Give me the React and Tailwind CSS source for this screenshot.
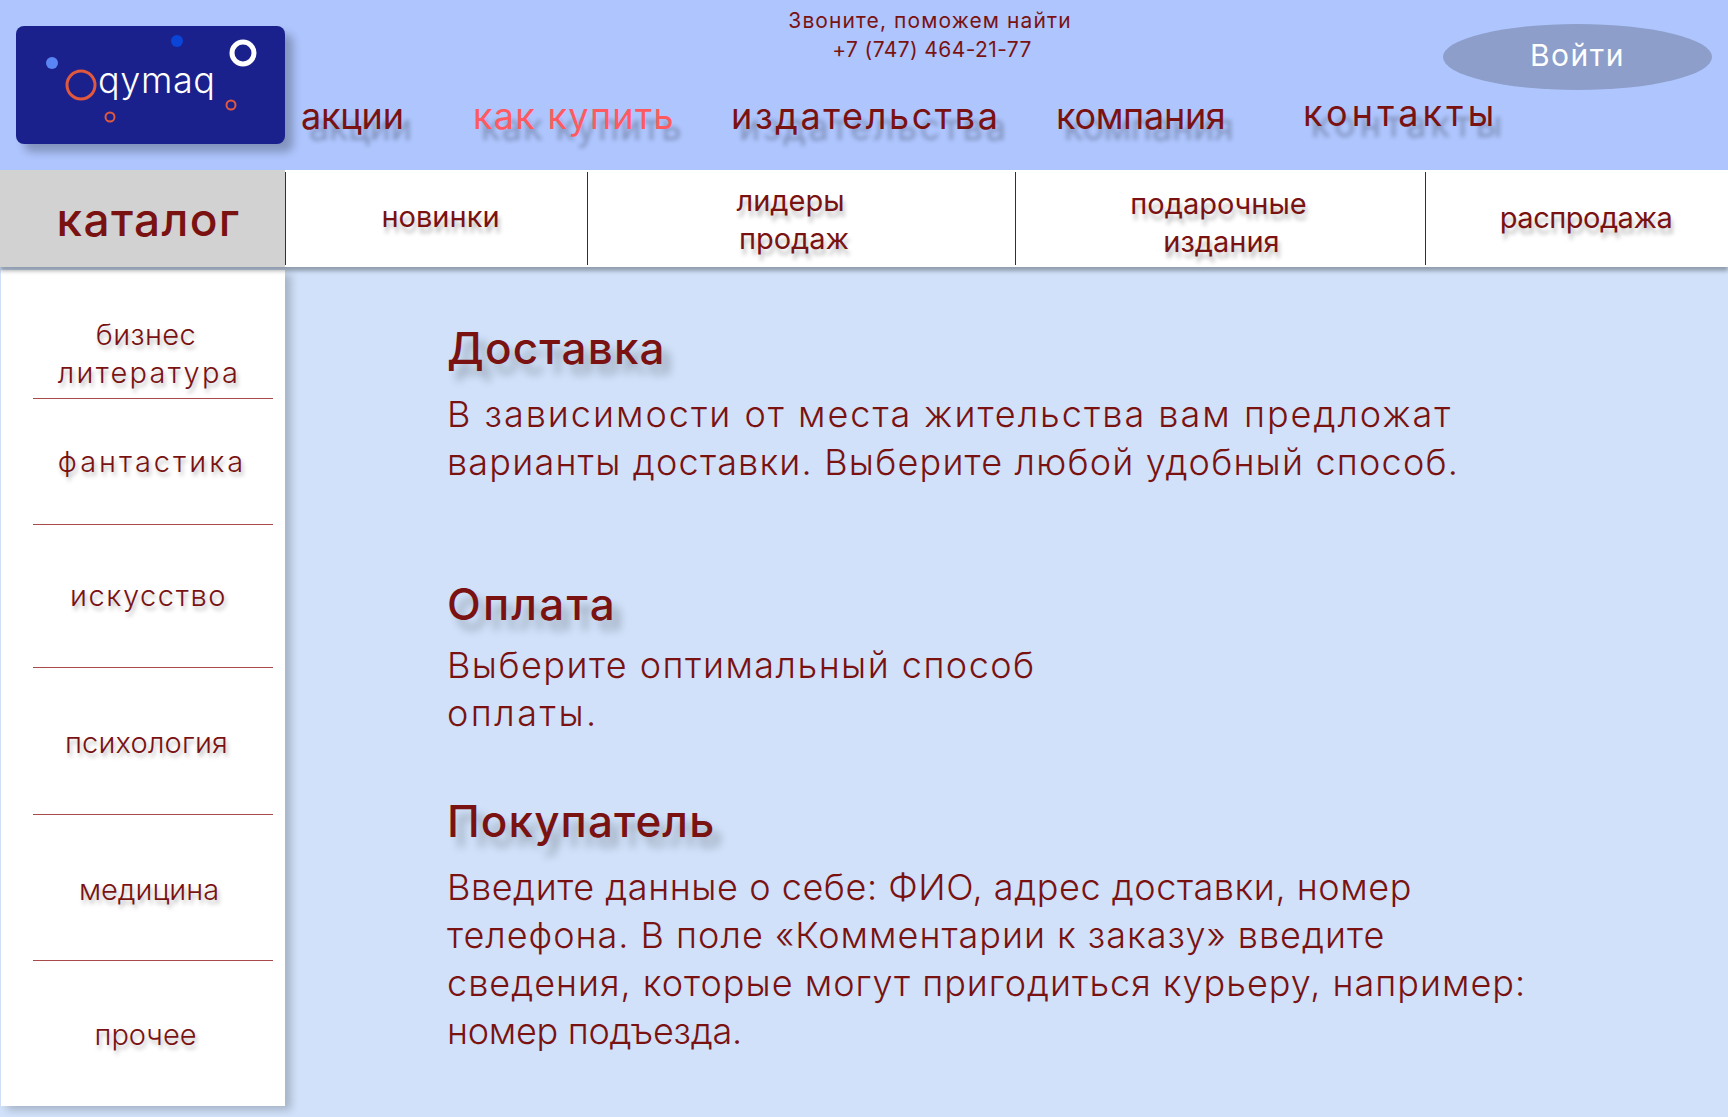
import React from 'react';

const shadowNav = '[text-shadow:8px_11px_4px_rgba(0,0,0,0.25)]';
const shadowCell = '[text-shadow:2px_6px_4px_rgba(0,0,0,0.25)]';
const shadowSide = '[text-shadow:2px_4px_4px_rgba(0,0,0,0.25)]';
const shadowHead = '[text-shadow:8px_10px_8px_rgba(0,0,0,0.25)]';

const Logo = () => (
  <div className="w-[269px] h-[118px] ml-4 mt-[26px] shrink-0 rounded-lg bg-[#1b218c] shadow-[8px_8px_8px_rgba(0,0,0,0.25)] relative">
    <svg width="269" height="118" viewBox="0 0 269 118" className="absolute inset-0">
      <circle cx="36" cy="37" r="6" fill="#5a86f5" />
      <circle cx="161" cy="15" r="6" fill="#0a45d8" />
      <circle cx="227" cy="27" r="11" fill="none" stroke="#fff" strokeWidth="5" />
      <circle cx="65" cy="59" r="14" fill="none" stroke="#e0583e" strokeWidth="3" />
      <circle cx="94" cy="91" r="4.5" fill="none" stroke="#e0583e" strokeWidth="2" />
      <circle cx="215" cy="79" r="4.5" fill="none" stroke="#e0583e" strokeWidth="2" />
      <text x="82" y="67" fill="#fff" fontSize="36" fontFamily="Inter, sans-serif" fontWeight="300" textLength="117">qymaq</text>
    </svg>
  </div>
);

const navItems = [
  { label: 'акции', cls: 'w-[172px] pt-2 text-[#7a1212] tracking-[-0.2px]' },
  { label: 'как купить', cls: 'w-[258px] pt-2 text-[#ff5a5f] tracking-[1.3px]' },
  { label: 'издательства', cls: 'w-[325px] pt-2 text-[#7a1212] tracking-[2.6px]' },
  { label: 'компания', cls: 'w-[247px] pt-2 text-[#7a1212] tracking-[-0.3px]' },
  { label: 'контакты', cls: 'w-[240px] pt-[5px] text-[#7a1212] tracking-[4.2px]' },
];

const Header = () => (
  <header className="h-[170px] bg-[#aec5fd] flex">
    <Logo />
    <div className="ml-4 flex-1 flex flex-col">
      <div className="h-[86px] flex">
        <div className="w-[1142px] pt-1.5 pl-[391px] text-center text-[21px] leading-[29px] font-normal text-[#7a1212]">
          <div className="w-[480px] ml-[-2px] tracking-[1.1px]">Звоните, поможем найти</div>
          <div className="w-[480px] tracking-[0.4px]">+7 (747) 464-21-77</div>
        </div>
      </div>
      <nav className="flex text-[36px] leading-[44px] font-normal">
        {navItems.map((n) => (
          <a key={n.label} className={`${n.cls} ${shadowNav} whitespace-nowrap`}>{n.label}</a>
        ))}
      </nav>
    </div>
    <div className="absolute left-[1443px] top-6 w-[269px] h-[66px] rounded-[50%] bg-[#8c9ec9] flex items-center justify-center text-white text-[30px] tracking-[1.5px]">
      <span className="mt-[-4px]">Войти</span>
    </div>
  </header>
);

const Cell = ({ cls, lines }) => (
  <div className={`${cls} h-full flex flex-col items-center justify-center text-[29px] leading-[38px] font-normal text-[#7a1212] ${shadowCell}`}>
    {lines.map((l) => (
      <span key={l.text} className={l.cls}>{l.text}</span>
    ))}
  </div>
);

const CatalogRow = () => (
  <div className="h-[97px] flex bg-white shadow-[0_4px_4px_rgba(0,0,0,0.3)] relative">
    <div className="w-[285px] bg-[#d2d2d2] flex items-center justify-center text-[46px] font-medium text-[#7a1212] tracking-[1.3px]">
      <span className="ml-3 mt-0.5">каталог</span>
    </div>
    <div className="w-px my-0.5 bg-[#7a1212]" />
    <Cell cls="w-[301px]" lines={[{ text: 'новинки', cls: 'mt-[-3px] ml-2' }]} />
    <div className="w-px my-0.5 bg-[#7a1212]" />
    <Cell cls="w-[427px]" lines={[{ text: 'лидеры', cls: 'mt-0.5 mr-[22px]' }, { text: 'продаж', cls: 'mr-[15px]' }]} />
    <div className="w-px my-0.5 bg-[#7a1212]" />
    <Cell cls="w-[409px]" lines={[{ text: 'подарочные', cls: 'mt-2 mr-1' }, { text: 'издания', cls: 'ml-0.5' }]} />
    <div className="w-px my-0.5 bg-[#7a1212]" />
    <Cell cls="flex-1" lines={[{ text: 'распродажа', cls: 'mt-[-2px] ml-[18px] tracking-[-0.5px]' }]} />
  </div>
);

const sideItems = [
  { lines: [{ t: 'бизнес', c: 'mr-[14px] tracking-[0.4px]' }, { t: 'литература', c: 'mr-2 tracking-[2.3px]' }], h: 'h-[129px]', pad: 'pt-[46px]' },
  { lines: [{ t: 'фантастика', c: 'mr-0.5 tracking-[3px]' }], h: 'h-[126px]', pad: 'pt-11' },
  { lines: [{ t: 'искусство', c: 'mr-[9px] tracking-[1.6px]' }], h: 'h-[143px]', pad: 'pt-[52px]' },
  { lines: [{ t: 'психология', c: 'mr-[13px] tracking-[0.2px]' }], h: 'h-[147px]', pad: 'pt-14' },
  { lines: [{ t: 'медицина', c: 'mr-2' }], h: 'h-[146px]', pad: 'pt-14' },
  { lines: [{ t: 'прочее', c: 'mr-[15px]' }], h: 'flex-1', pad: 'pt-[55px]' },
];

const Sidebar = () => (
  <aside className="ml-px mt-[3px] w-[284px] h-[836px] bg-white shadow-[6px_4px_8px_rgba(0,0,0,0.2)] flex flex-col shrink-0">
    {sideItems.map((s, i) => (
      <div
        key={s.lines[0].t}
        className={`${s.h} ml-8 mr-[12px] ${s.pad} ${i < 5 ? 'border-b border-[#a84a4a]' : ''} flex flex-col items-center text-[29px] leading-[38px] font-light text-[#7a1212] ${shadowSide}`}
      >
        {s.lines.map((l) => (
          <span key={l.t} className={l.c}>{l.t}</span>
        ))}
      </div>
    ))}
  </aside>
);

const sections = [
  {
    title: 'Доставка',
    titleCls: 'tracking-[1.2px]',
    cls: 'mt-[55px]',
    gap: 'mt-4',
    lines: [
      { t: 'В зависимости от места жительства вам предложат', c: 'tracking-[2px]' },
      { t: 'варианты доставки. Выберите любой удобный способ.', c: 'tracking-[1.2px]' },
    ],
  },
  {
    title: 'Оплата',
    titleCls: 'tracking-[2.2px]',
    cls: 'mt-[92px]',
    gap: 'mt-[11px]',
    lines: [
      { t: 'Выберите оптимальный способ', c: 'tracking-[1.47px]' },
      { t: 'оплаты.', c: 'tracking-[2.5px]' },
    ],
  },
  {
    title: 'Покупатель',
    titleCls: 'tracking-[1.1px]',
    cls: 'mt-[58px]',
    gap: 'mt-4',
    lines: [
      { t: 'Введите данные о себе: ФИО, адрес доставки, номер', c: 'tracking-[0.56px]' },
      { t: 'телефона. В поле «Комментарии к заказу» введите', c: 'tracking-[1px]' },
      { t: 'сведения, которые могут пригодиться курьеру, например:', c: 'tracking-[1px]' },
      { t: 'номер подъезда.', c: 'tracking-[-0.3px]' },
    ],
  },
];

export default function App() {
  return (
    <div className="w-[1728px] h-[1117px] overflow-hidden relative bg-[#d0e1f9] font-['Inter',sans-serif]">
      <Header />
      <CatalogRow />
      <div className="flex">
        <Sidebar />
        <main className="pl-[162px]">
          {sections.map((s) => (
            <section key={s.title} className={s.cls}>
              <h2 className={`text-[44px] leading-[52px] font-medium text-[#7a1212] ${s.titleCls} ${shadowHead}`}>{s.title}</h2>
              <div className={`${s.gap} text-[36px] leading-[48px] font-light text-[#7a1212]`}>
                {s.lines.map((l) => (
                  <div key={l.t} className={`whitespace-nowrap ${l.c}`}>{l.t}</div>
                ))}
              </div>
            </section>
          ))}
        </main>
      </div>
    </div>
  );
}
